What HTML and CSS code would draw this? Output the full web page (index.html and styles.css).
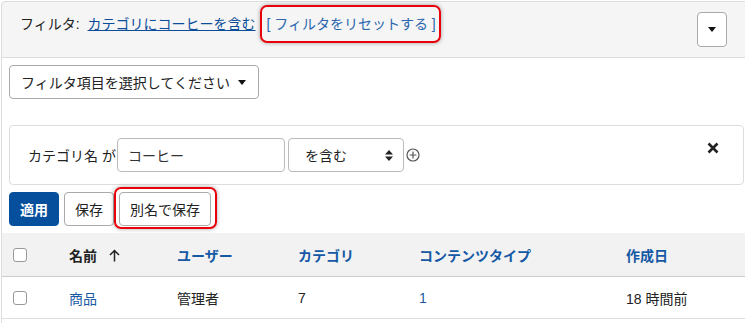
FILE: index.html
```html
<!DOCTYPE html>
<html lang="ja">
<head>
    <meta charset="UTF-8">
    <title>フィルタ</title>
    <link rel="stylesheet" href="styles.css">
</head>
<body>
<div class="page">

    <div class="filter-bar">
        <div class="filter-summary">
            <span class="label">フィルタ:</span>
            <a href="#" class="filter-link">カテゴリにコーヒーを含む</a>
            <a href="#" class="reset-link highlight">[ フィルタをリセットする ]</a>
        </div>
        <button class="menu-btn" type="button">
            <svg width="8" height="5" viewBox="0 0 8 5"><path d="M0 0h8L4 5z" fill="#111"/></svg>
        </button>
    </div>

    <div class="content">
        <button class="btn select-btn" type="button">
            フィルタ項目を選択してください
            <svg width="8" height="5" viewBox="0 0 8 5"><path d="M0 0h8L4 5z" fill="#111"/></svg>
        </button>

        <div class="filter-box">
            <div class="condition">
                <span class="cond-label">カテゴリ名 が</span>
                <input class="cond-input" type="text" value="コーヒー">
                <div class="cond-select">
                    <span>を含む</span>
                    <svg width="8" height="11" viewBox="0 0 8 11"><path d="M0 4.5L4 0l4 4.5zM0 6.5h8L4 11z" fill="#222"/></svg>
                </div>
                <svg class="add-icon" width="14" height="14" viewBox="0 0 14 14">
                    <circle cx="7" cy="7" r="6" fill="none" stroke="#555" stroke-width="1.2"/>
                    <path d="M7 3.6v6.8M3.6 7h6.8" stroke="#555" stroke-width="1.2"/>
                </svg>
            </div>
            <svg class="close-icon" width="12" height="12" viewBox="0 0 12 12">
                <path d="M1.5 1.5l9 9M10.5 1.5l-9 9" stroke="#222" stroke-width="2.6"/>
            </svg>
        </div>

        <div class="actions">
            <button class="btn btn-primary" type="button">適用</button>
            <button class="btn" type="button">保存</button>
            <button class="btn highlight btn-saveas" type="button">別名で保存</button>
        </div>
    </div>

    <table class="list">
        <colgroup>
            <col class="c-check">
            <col class="c-name">
            <col class="c-user">
            <col class="c-cat">
            <col class="c-type">
            <col>
        </colgroup>
        <thead>
            <tr>
                <th class="check"><span class="checkbox"></span></th>
                <th class="sorted">名前
                    <svg class="sort-arrow" width="11" height="13" viewBox="0 0 11 13"><path d="M5.5 1.5v11M1 6l4.5-4.5L10 6" fill="none" stroke="#222" stroke-width="1.5"/></svg>
                </th>
                <th><a href="#">ユーザー</a></th>
                <th><a href="#">カテゴリ</a></th>
                <th><a href="#">コンテンツタイプ</a></th>
                <th><a href="#">作成日</a></th>
            </tr>
        </thead>
        <tbody>
            <tr>
                <td class="check"><span class="checkbox"></span></td>
                <td><a href="#">商品</a></td>
                <td>管理者</td>
                <td>7</td>
                <td><a href="#">1</a></td>
                <td>18 時間前</td>
            </tr>
        </tbody>
    </table>

</div>
</body>
</html>
```

FILE: styles.css
```css
body {
    margin: 0;
    background-color: white;
    font-family: "Liberation Sans", "Noto Sans CJK JP", sans-serif;
    font-size: 14px;
    color: #222;
}

.page {
    margin: 1px 0 0 1px;
    border-left: 1px solid #ddd;
    border-top-left-radius: 4px;
    min-height: 330px;
}

.filter-bar {
    display: flex;
    justify-content: space-between;
    align-items: flex-start;
    height: 55px;
    background-color: #f5f5f5;
    border-top: 1px solid #ddd;
    border-bottom: 1px solid #ddd;
    border-top-left-radius: 4px;
}

.filter-summary {
    padding: 12px 0 0 18px;
    line-height: 20px;
}

.label {
    margin-right: 4px;
}

.filter-link {
    color: #0b4d99;
    text-decoration: underline;
}

.reset-link {
    margin-left: 7px;
    color: #2a67ad;
    text-decoration: none;
}

.highlight {
    position: relative;
}

.highlight::after {
    content: "";
    position: absolute;
    top: -11px;
    bottom: -11px;
    left: -6px;
    right: -5px;
    border: 2px solid #e8000b;
    border-radius: 7px;
    box-shadow: 0 0 4px rgba(0, 0, 0, 0.35);
}

.menu-btn {
    margin: 10px 18px 0 0;
    width: 30px;
    height: 35px;
    background-color: white;
    border: 1px solid #aaa;
    border-radius: 4px;
    padding: 0;
    display: flex;
    align-items: center;
    justify-content: center;
}

.content {
    padding: 7px 0 0 7px;
}

.btn {
    font-family: inherit;
    font-size: 14px;
    color: #222;
    background-color: white;
    border: 1px solid #aaa;
    border-radius: 4px;
    height: 34px;
    padding: 0 10px;
    display: inline-flex;
    align-items: center;
    gap: 8px;
    white-space: nowrap;
}

.select-btn {
    padding: 0 12px 0 11px;
}

.filter-box {
    margin-top: 26px;
    margin-right: 1px;
    height: 58px;
    border: 1px solid #ddd;
    border-radius: 4px;
    display: flex;
    justify-content: space-between;
    align-items: flex-start;
}

.condition {
    display: flex;
    align-items: center;
    padding: 12px 0 0 18px;
}

.cond-label {
    margin-right: 1px;
}

.cond-input {
    width: 168px;
    height: 34px;
    box-sizing: border-box;
    border: 1px solid #bbb;
    border-radius: 4px;
    padding: 0 10px;
    font-family: inherit;
    font-size: 14px;
    color: #333;
}

.cond-select {
    margin-left: 3px;
    width: 116px;
    height: 34px;
    box-sizing: border-box;
    border: 1px solid #bbb;
    border-radius: 4px;
    padding: 0 10px 0 16px;
    display: flex;
    align-items: center;
    justify-content: space-between;
}

.add-icon {
    margin-left: 2px;
}

.close-icon {
    margin: 16px 24px 0 0;
}

.actions {
    margin-top: 7px;
    display: flex;
    gap: 5px;
}

.btn-primary {
    background-color: #054f9c;
    border-color: #054f9c;
    color: white;
    font-weight: bold;
    padding: 0 10px;
}

.btn-saveas::after {
    top: -6px;
    bottom: -4px;
    left: -6px;
    right: -7px;
}

.list {
    margin-top: 7px;
    width: 100%;
    border-collapse: collapse;
    table-layout: fixed;
}

.c-check { width: 67px; }
.c-name { width: 108px; }
.c-user { width: 121px; }
.c-cat { width: 121px; }
.c-type { width: 207px; }

.list th,
.list td {
    text-align: left;
    padding: 0;
}

.list th {
    height: 43px;
    background-color: #f2f2f2;
    border-bottom: 1px solid #ccc;
    font-weight: bold;
    color: #222;
}

.list td {
    height: 41px;
    border-bottom: 1px solid #ddd;
}

.list a {
    color: #1559a5;
    text-decoration: none;
}

.list td a {
    color: #1a5aa3;
}

.list .check {
    padding-left: 11px;
}

.checkbox {
    display: block;
    width: 12px;
    height: 12px;
    border: 1px solid #999;
    border-radius: 3px;
    background-color: white;
}

.sort-arrow {
    margin-left: 8px;
    vertical-align: -1px;
}
```
